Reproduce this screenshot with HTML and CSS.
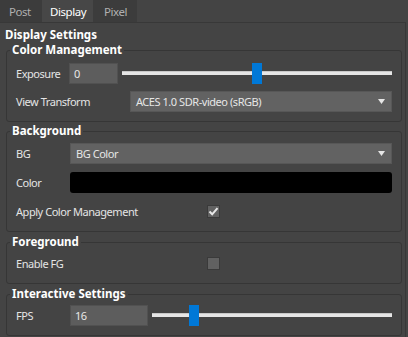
FILE: index.html
```html
<!DOCTYPE html>
<html>
<head>
<meta charset="utf-8">
<link rel="stylesheet" href="styles.css">
</head>
<body>
<div class="tabs">
  <div class="tab">Post</div>
  <div class="tab active">Display</div>
  <div class="tab">Pixel</div>
</div>
<div class="pane">
  <div class="heading">Display Settings</div>

  <fieldset class="group g-color">
    <legend>Color Management</legend>
    <div class="body">
      <div class="row">
        <span class="label w53">Exposure</span>
        <div class="input w49">0</div>
        <div class="slider"><div class="track"></div><div class="thumb" style="left:calc((100% - 10px) * 0.5)"></div></div>
      </div>
      <div class="row">
        <span class="label w114">View Transform</span>
        <div class="combo"><span>ACES 1.0 SDR-video (sRGB)</span><svg class="arrow" width="7" height="5" viewBox="0 0 7 5"><path d="M0 0H7L3.5 5Z" fill="#e6e6e6"/></svg></div>
      </div>
    </div>
  </fieldset>

  <fieldset class="group g-bg">
    <legend>Background</legend>
    <div class="body">
      <div class="row">
        <span class="label w54">BG</span>
        <div class="combo"><span>BG Color</span><svg class="arrow" width="7" height="5" viewBox="0 0 7 5"><path d="M0 0H7L3.5 5Z" fill="#e6e6e6"/></svg></div>
      </div>
      <div class="row">
        <span class="label w54">Color</span>
        <div class="swatch"></div>
      </div>
      <div class="row">
        <span class="label w191">Apply Color Management</span>
        <div class="check"><svg width="11" height="11" viewBox="0 0 11 11"><path d="M1.5 5.5L4.2 8.3L9.5 2.2" fill="none" stroke="#e8e8e8" stroke-width="2"/></svg></div>
      </div>
    </div>
  </fieldset>

  <fieldset class="group g-fg">
    <legend>Foreground</legend>
    <div class="body">
      <div class="row">
        <span class="label w191">Enable FG</span>
        <div class="check"></div>
      </div>
    </div>
  </fieldset>

  <fieldset class="group g-int">
    <legend>Interactive Settings</legend>
    <div class="body">
      <div class="row">
        <span class="label w54">FPS</span>
        <div class="input w78">16</div>
        <div class="slider"><div class="track"></div><div class="thumb" style="left:calc((100% - 10px) * 0.16)"></div></div>
      </div>
    </div>
  </fieldset>
</div>
</body>
</html>
```

FILE: styles.css
```css
html, body {
  margin: 0;
  padding: 0;
  background: #444444;
  font-family: "Noto Sans", "Open Sans", sans-serif;
  font-size: 11px;
  letter-spacing: -0.45px;
  color: #e4e4e4;
}
.tabs {
  display: flex;
  height: 22px;
  align-items: flex-end;
}
.tab {
  height: 22px;
  line-height: 23px;
  background: #3c3c3c;
  color: #b0b0b0;
  font-size: 11.5px;
  box-sizing: border-box;
}
.tab:nth-child(1) { width: 42px; padding-left: 9px; }
.tab:nth-child(2) { width: 51px; padding-left: 8px; }
.tab:nth-child(3) { width: 44px; padding-left: 11px; }
.tab.active {
  background: #474747;
  color: #ffffff;
}
.pane {
  width: 406px;
  box-sizing: border-box;
  border-top: 1px solid #383838;
  border-right: 1px solid #383838;
  padding: 0 3px 0 6px;
  height: 315px;
}
.heading {
  padding-top: 5px;
  margin-left: -1px;
  line-height: 14px;
  font-weight: bold;
  font-size: 11.5px;
  letter-spacing: 0;
  color: #ffffff;
}
.group {
  margin: 0;
  padding: 0;
  border: 1px solid #363636;
  border-radius: 3px;
  min-width: 0;
}
.group legend {
  padding: 0 2px;
  margin-left: 3px;
  line-height: 16px;
  font-weight: bold;
  font-size: 11.5px;
  letter-spacing: 0;
  color: #ffffff;
}
.g-bg { margin-top: 1px; }
.g-fg { margin-top: 2px; }
.g-int { margin-top: 2px; }
.body {
  display: flex;
  flex-direction: column;
  padding: 2px 9px 9px 9px;
}
.g-color .body { padding-top: 4px; gap: 6px; }
.g-bg .body { padding-top: 3px; gap: 7px; }
.row {
  display: flex;
  align-items: center;
  height: 22px;
}
.label { flex: none; }
.w53 { width: 53px; }
.w54 { width: 54px; }
.w114 { width: 114px; }
.w191 { width: 191px; }
.input {
  flex: none;
  height: 21px;
  box-sizing: border-box;
  background: #5d5d5d;
  border: 1px solid #515151;
  line-height: 19px;
  padding-left: 4px;
  color: #e8e8e8;
}
.w49 { width: 49px; }
.w78 { width: 78px; }
.slider {
  flex: 1;
  position: relative;
  height: 21px;
  margin-left: 4px;
  display: flex;
  align-items: center;
}
.track {
  flex: 1;
  height: 4px;
  background: #e6e6e6;
  border-top: 1px solid #c9c9c9;
  box-sizing: border-box;
}
.thumb {
  position: absolute;
  top: 0;
  width: 10px;
  height: 21px;
  background: #0078d7;
}
.combo {
  flex: 1;
  height: 21px;
  box-sizing: border-box;
  background: #626262;
  border: 1px solid #575757;
  display: flex;
  align-items: center;
  justify-content: space-between;
  padding: 0 6px 0 5px;
  color: #e6e6e6;
}
.swatch {
  flex: 1;
  height: 21px;
  background: #000000;
  border-radius: 3px;
}
.check {
  width: 13px;
  height: 13px;
  box-sizing: border-box;
  background: #616161;
  border: 1px solid #3a3a3a;
  display: flex;
  align-items: center;
  justify-content: center;
}
```
